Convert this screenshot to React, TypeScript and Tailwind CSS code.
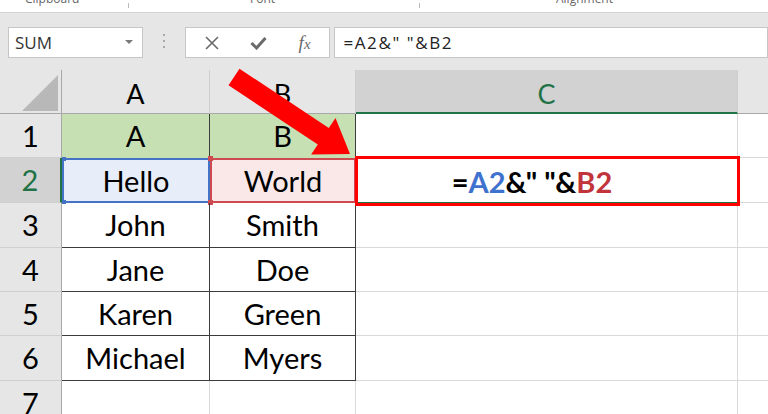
import React from 'react';

const rows = [
  { n: '1', a: 'A', b: 'B', h: 'h-[44px]' },
  { n: '2', a: 'Hello', b: 'World', h: 'h-[45px]' },
  { n: '3', a: 'John', b: 'Smith', h: 'h-[45px]' },
  { n: '4', a: 'Jane', b: 'Doe', h: 'h-[44px]' },
  { n: '5', a: 'Karen', b: 'Green', h: 'h-[44px]' },
  { n: '6', a: 'Michael', b: 'Myers', h: 'h-[45px]' },
  { n: '7', a: '', b: '', h: 'h-[44px]' },
];

function RibbonLabels() {
  return (
    <div className="flex h-[13px] overflow-hidden border-b border-[#d4d4d4] bg-white font-['Open_Sans',sans-serif] text-[12px] leading-[16px] text-[#666]">
      <div className="w-[128px] pl-[25px] -mt-[9px]">Clipboard</div>
      <div className="w-px h-[5px] mt-[3px] bg-[#bbb]" />
      <div className="w-[290px] pl-[121px] -mt-[9px]">Font</div>
      <div className="w-px h-[5px] mt-[3px] bg-[#bbb]" />
      <div className="pl-[136px] -mt-[9px]">Alignment</div>
    </div>
  );
}

function FormulaBar() {
  return (
    <div className="flex h-[57px] bg-[#e6e6e6] pt-[14px] font-['Open_Sans',sans-serif]">
      <div className="ml-[8px] w-[137px] h-[31px] bg-white border border-[#c6c6c6] flex items-center justify-between pl-[6px] pr-[9px]">
        <span className="text-[17px] text-[#333]">SUM</span>
        <svg width="8" height="5" viewBox="0 0 8 5">
          <path d="M0 0 L8 0 L4 4 Z" fill="#7a7a7a" />
        </svg>
      </div>
      <div className="w-[42px] flex flex-col items-center pt-[7px] gap-[4px]">
        <span className="w-[2px] h-[2px] bg-[#a9a9a9]" />
        <span className="w-[2px] h-[2px] bg-[#a9a9a9]" />
        <span className="w-[2px] h-[2px] bg-[#a9a9a9]" />
      </div>
      <div className="w-[148px] h-[31px] bg-white border border-[#c6c6c6] flex items-center">
        <div className="w-[50px] flex justify-center pl-[2px]">
          <svg width="14" height="14" viewBox="0 0 14 14">
            <path d="M1 1 L13 13 M13 1 L1 13" stroke="#6a6a6a" strokeWidth="1.6" fill="none" />
          </svg>
        </div>
        <div className="w-[46px] flex justify-center">
          <svg width="17" height="14" viewBox="0 0 17 14">
            <path d="M1.5 7 L6.5 12 L15.5 2" stroke="#6a6a6a" strokeWidth="3" fill="none" />
          </svg>
        </div>
        <div className="w-[46px] flex justify-center">
          <span className="font-['Liberation_Serif',serif] italic text-[19px] text-[#6a6a6a] leading-none">
            f<span className="text-[15px]">x</span>
          </span>
        </div>
      </div>
      <div className="ml-[4px] w-[440px] h-[31px] bg-white border border-[#c6c6c6] flex items-center pl-[8px]">
        <span className="text-[17px] text-[#222] tracking-[1.6px]">=A2&amp;" "&amp;B2</span>
      </div>
    </div>
  );
}

function HeaderRow() {
  return (
    <div className="flex h-[44px] text-[27px]">
      <div className="w-[62px] bg-[#e6e6e6] border-r border-b border-[#a8a8a8] flex items-end justify-end pr-[2px] pb-[1px]">
        <svg width="37" height="37" viewBox="0 0 37 37">
          <path d="M0 36 L36 36 L36 0 Z" fill="#b8b8b8" />
        </svg>
      </div>
      <div className="w-[148px] bg-[#e6e6e6] border-r border-r-[#cfcfcf] border-b border-b-[#a8a8a8] flex items-center justify-center pt-[6px]">
        A
      </div>
      <div className="w-[146px] bg-[#e6e6e6] border-r border-r-[#cfcfcf] border-b border-b-[#a8a8a8] flex items-center justify-center pt-[6px]">
        B
      </div>
      <div className="w-[382px] bg-[#d2d2d2] border-r border-r-[#cfcfcf] border-b-2 border-b-[#217346] flex items-center justify-center pt-[6px] text-[#217346]">
        C
      </div>
      <div className="w-[30px] bg-[#e6e6e6] border-b border-b-[#a8a8a8]" />
    </div>
  );
}

function Formula() {
  return (
    <span className="font-bold text-[29px] -ml-[30px] pt-[3px]">
      =<span className="text-[#3f72cf]">A2</span>&amp;" "&amp;<span className="text-[#c2343c]">B2</span>
    </span>
  );
}

function SheetRow({ r, i }: { r: (typeof rows)[number]; i: number }) {
  const sel = r.n === '2';
  const head = sel
    ? 'bg-[#d2d2d2] text-[#217346] border-r-2 border-r-[#217346]'
    : 'bg-[#e6e6e6] border-r border-r-[#a8a8a8]';

  let aCls = 'border-r border-b border-[#d9d9d9]';
  let bCls = 'border-r border-b border-[#d9d9d9]';
  if (i === 0) {
    aCls = 'bg-[#c6e0b4] border-r border-r-[#3c3c3c]';
    bCls = 'bg-[#c6e0b4] border-r border-r-[#3c3c3c]';
  } else if (sel) {
    aCls = 'bg-[#e8eef9] border-2 border-[#4472c4]';
    bCls = 'bg-[#fae8e9] border-2 border-[#cf4a50]';
  } else if (i < 6) {
    aCls = 'border-r border-b border-[#3c3c3c]';
    bCls = 'border-r border-b border-[#3c3c3c]';
  }

  return (
    <div className={`flex text-[29px] ${r.h}`}>
      <div className={`w-[62px] border-b border-b-[#cfcfcf] flex items-center justify-center ${head}`}>
        {r.n}
      </div>
      <div className={`relative w-[148px] flex items-center justify-center ${aCls}`}>
        {r.a}
        {sel && (
          <>
            <span className="absolute -left-[2px] -top-[3px] w-[4px] h-[4px] bg-[#4472c4]" />
            <span className="absolute -left-[2px] -bottom-[3px] w-[4px] h-[4px] bg-[#4472c4]" />
          </>
        )}
      </div>
      <div className={`relative w-[146px] flex items-center justify-center ${bCls}`}>
        {r.b}
        {sel && (
          <>
            <span className="absolute -left-[4px] -top-[4px] w-[5px] h-[5px] bg-[#cf4a50]" />
            <span className="absolute -left-[4px] -bottom-[4px] w-[5px] h-[5px] bg-[#cf4a50]" />
          </>
        )}
      </div>
      <div
        className={`w-[382px] flex items-center justify-center ${
          sel ? 'border border-[#217346]' : 'border-r border-b border-[#d9d9d9]'
        }`}
      >
        {sel && <Formula />}
      </div>
      <div className="w-[30px] border-b border-[#d9d9d9]" />
    </div>
  );
}

function Arrow() {
  return (
    <svg className="absolute left-0 top-0 pointer-events-none" width="768" height="414" viewBox="0 0 768 414">
      <polygon
        points="228.5,85.3 239.5,68.7 328.8,128 335.5,118 350,154 311.1,154.6 317.8,144.6"
        fill="#ff0000"
      />
    </svg>
  );
}

export default function App() {
  return (
    <div className="relative w-[768px] h-[414px] overflow-hidden bg-white font-['Lato',sans-serif] text-black">
      <RibbonLabels />
      <FormulaBar />
      <HeaderRow />
      {rows.map((r, i) => (
        <SheetRow key={r.n} r={r} i={i} />
      ))}
      <Arrow />
      <div className="absolute left-[355px] top-[156px] w-[385px] h-[50px] border-[3px] border-[#ff0000]" />
    </div>
  );
}
